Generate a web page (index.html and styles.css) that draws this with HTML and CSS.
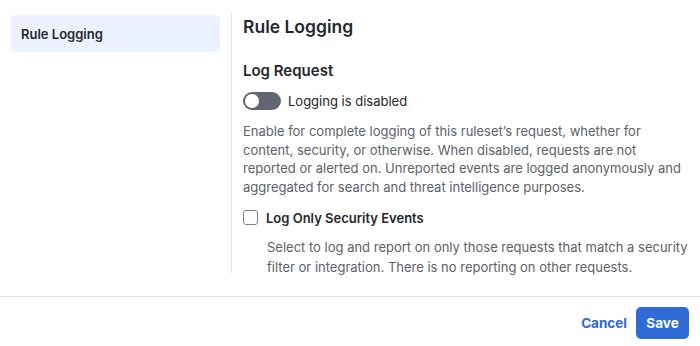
FILE: index.html
```html
<!DOCTYPE html>
<html>
<head>
<meta charset="utf-8">
<link rel="stylesheet" href="styles.css">
</head>
<body>
<div class="page">
  <div class="main">
    <nav class="sidebar">
      <div class="nav-item">Rule Logging</div>
    </nav>
    <section class="content">
      <h1 class="title">Rule Logging</h1>
      <h2 class="subtitle">Log Request</h2>
      <div class="toggle-row">
        <span class="toggle"><span class="knob"></span></span>
        <span class="toggle-label">Logging is disabled</span>
      </div>
      <p class="desc">Enable for complete logging of this ruleset’s request, whether for content, security, or otherwise. When disabled, requests are not reported or alerted on. Unreported events are logged anonymously and aggregated for search and threat intelligence purposes.</p>
      <div class="check-row">
        <span class="checkbox"></span>
        <span class="check-label">Log Only Security Events</span>
      </div>
      <p class="desc sub">Select to log and report on only those requests that match a security filter or integration. There is no reporting on other requests.</p>
    </section>
  </div>
  <footer class="footer">
    <button class="btn-link">Cancel</button>
    <button class="btn-primary">Save</button>
  </footer>
</div>
</body>
</html>
```

FILE: styles.css
```css
* { box-sizing: border-box; }
html, body { margin: 0; padding: 0; background: #fff; }
body {
  font-family: Inter, "Noto Sans", "Liberation Sans", sans-serif;
  color: #24272c;
  width: 700px;
  height: 346px;
  overflow: hidden;
}
.page { display: flex; flex-direction: column; height: 346px; }
.main {
  display: flex;
  padding-top: 12px;
  height: 284px;
}
.sidebar {
  width: 231px;
  padding: 3px 11px 0 11px;
  flex-shrink: 0;
}
.nav-item {
  background: #ecf2fd;
  border-radius: 5px;
  height: 37px;
  padding-left: 10px;
  display: flex;
  align-items: center;
  font-size: 13px;
  font-weight: 600;
  color: #24272c;
}
.content {
  border-left: 1px solid #e6e6e8;
  padding-left: 11px;
  padding-right: 6px;
  height: 261px;
}
.title {
  margin: 3px 0 0 0;
  font-size: 17.5px;
  line-height: 24px;
  font-weight: 600;
}
.subtitle {
  margin: 22px 0 0 0;
  font-size: 15px;
  line-height: 20px;
  font-weight: 600;
}
.toggle-row {
  display: flex;
  align-items: center;
  margin-top: 10px;
  height: 20px;
}
.toggle {
  width: 38px;
  height: 18px;
  border-radius: 9px;
  background: #5f6670;
  position: relative;
  flex-shrink: 0;
}
.knob {
  position: absolute;
  left: 2px;
  top: 2px;
  width: 14px;
  height: 14px;
  border-radius: 50%;
  background: #fff;
}
.toggle-label {
  margin-left: 7px;
  font-size: 13px;
  color: #24272c;
}
.desc {
  margin: 11px 0 0 0;
  padding-right: 10px;
  font-size: 13px;
  line-height: 18.7px;
  color: #5d6168;
}
.check-row {
  display: flex;
  align-items: center;
  margin-top: 11px;
  height: 20px;
}
.checkbox {
  width: 15px;
  height: 15px;
  border: 1.5px solid #7c828c;
  border-radius: 3px;
  margin-left: 0;
  flex-shrink: 0;
}
.check-label {
  margin-left: 8px;
  font-size: 13px;
  font-weight: 600;
  color: #24272c;
}
.sub {
  margin-top: 9px;
  padding-left: 24px;
  padding-right: 0;
  line-height: 20px;
}
.footer {
  border-top: 1px solid #dcdde0;
  margin-top: 12px;
  flex: 1;
  display: flex;
  justify-content: flex-end;
  align-items: center;
  padding: 3px 11px 0 0;
  gap: 9px;
}
.btn-link {
  background: none;
  border: none;
  font-family: inherit;
  font-size: 13.5px;
  font-weight: 700;
  color: #2f6bd4;
  padding: 0;
}
.btn-primary {
  background: #2f6bd4;
  color: #fff;
  border: none;
  border-radius: 5px;
  font-family: inherit;
  font-size: 13.5px;
  font-weight: 700;
  width: 53px;
  height: 32px;
  padding: 0;
}
```
